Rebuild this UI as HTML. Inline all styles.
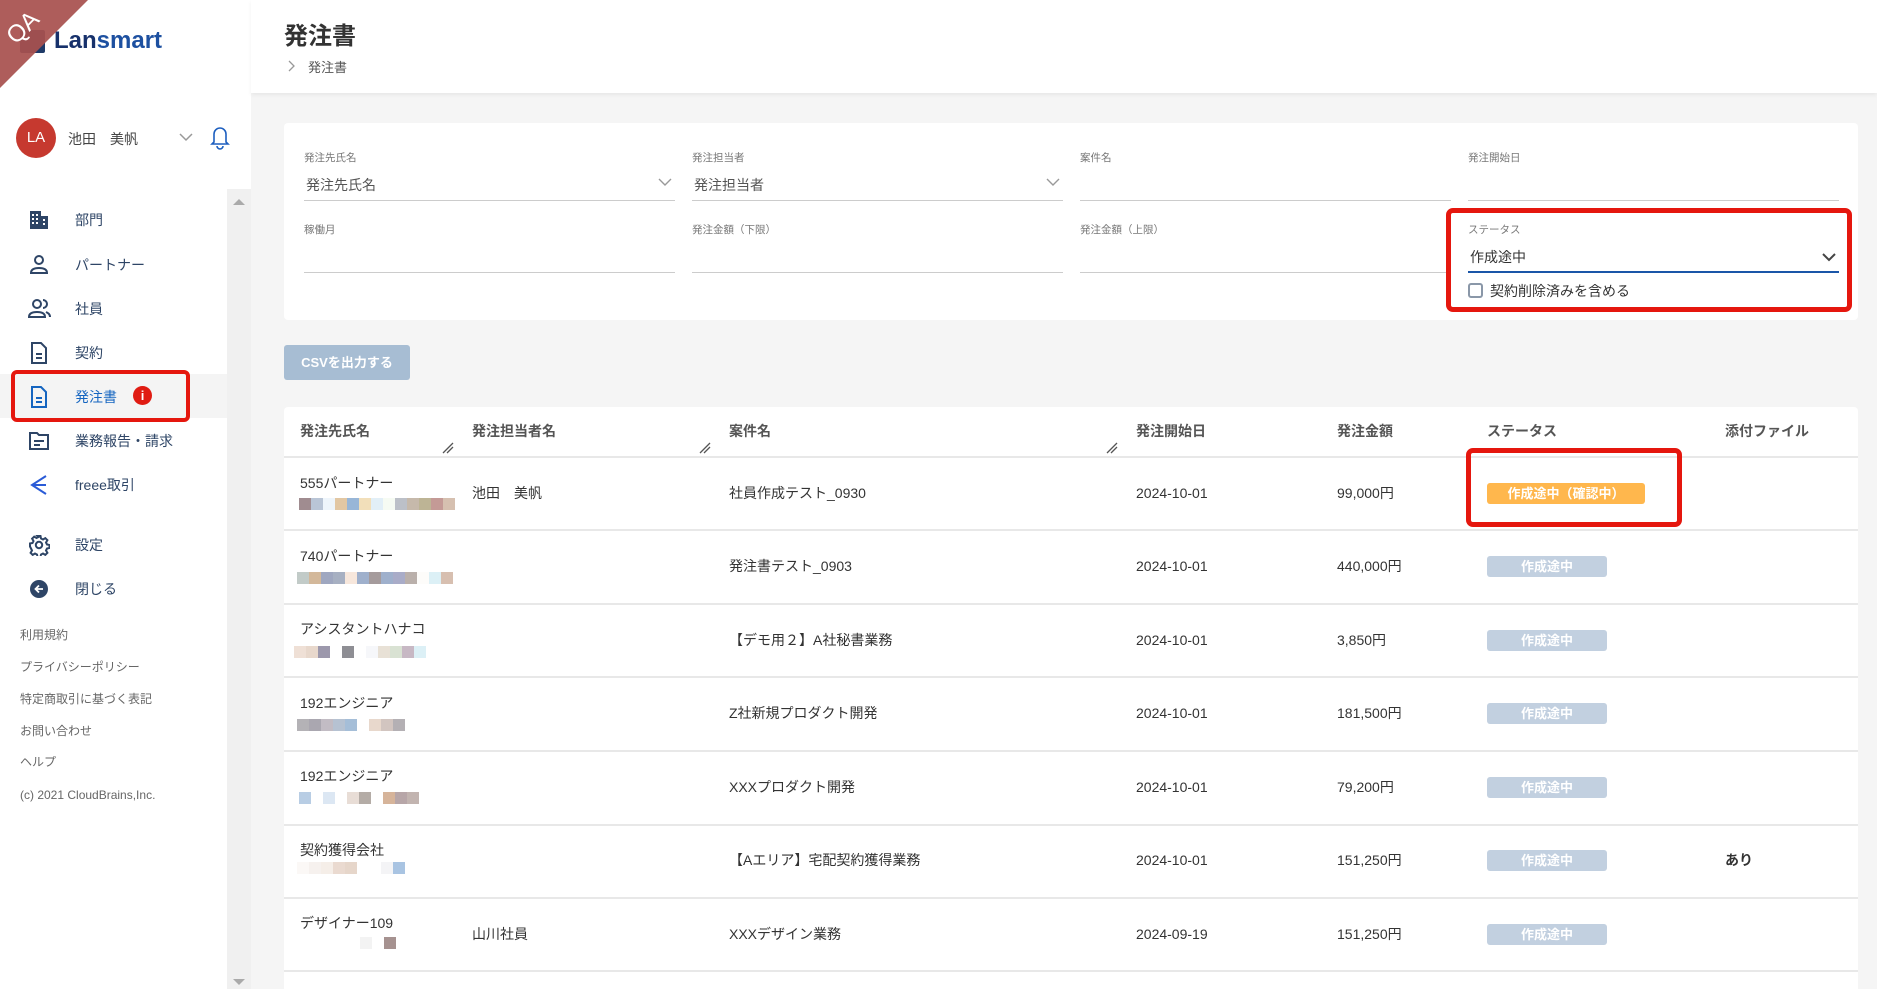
<!DOCTYPE html>
<html><head><meta charset="utf-8"><style>
*{box-sizing:border-box;margin:0;padding:0}
body{width:1877px;height:989px;overflow:hidden;background:#f5f5f5;font-family:"Liberation Sans","Noto Sans CJK JP",sans-serif;color:#333;position:relative}
.a{position:absolute;white-space:nowrap}
#side{position:absolute;left:0;top:0;width:251px;height:989px;background:#fff}
.mi{position:absolute;left:0;width:227px;height:44px}
.mi .t{position:absolute;left:75px;top:12px;font-size:14px;color:#2e4566}
.mi svg{position:absolute;left:28px;top:11px}
.fl{position:absolute;left:20px;font-size:12px;color:#666}
.card{position:absolute;background:#fff;border-radius:4px}
.lb{position:absolute;font-size:10.5px;color:#777}
.in{position:absolute;width:371px;height:1px;background:#ccc}
.vl{position:absolute;font-size:14px;color:#444}
.th{position:absolute;top:421px;font-size:14px;font-weight:bold;color:#555}
.rl{position:absolute;left:284px;width:1574px;height:2px;background:#e8e8e8}
.td{position:absolute;font-size:14px;color:#333;line-height:20px}
.bd{position:absolute;left:1487px;width:120px;height:21px;background:#c2d0e0;border-radius:3px;color:#fff;font-size:13px;font-weight:bold;text-align:center;line-height:21px}
.blur{position:absolute;height:12px;display:flex}
.blur i{display:block;width:12px;height:12px}
.rs{position:absolute;width:12px;height:12px}
</style></head><body>
<div id="side">
 <div class="a" style="left:20px;top:30px;width:25px;height:23px;background:#1f3a68;border-radius:2px"></div>
 <div class="a" style="left:54px;top:27px;font-size:24px;font-weight:bold;color:#17316b">Lan<span style="color:#1d50a0">smart</span></div>
 <svg class="a" style="left:0;top:0" width="90" height="90"><polygon points="0,0 88,0 0,88" fill="#a8514f" opacity="0.93"/></svg>
 <div class="a" style="left:6px;top:14px;font-size:24px;color:#fff;transform:rotate(-45deg);font-weight:300">QA</div>
 <div class="a" style="left:16px;top:118px;width:40px;height:40px;border-radius:50%;background:#c6392f;color:#fff;font-size:15px;text-align:center;line-height:40px">LA</div>
 <div class="a" style="left:68px;top:129px;font-size:14px;color:#444">池田　美帆</div>
 <svg class="a" style="left:178px;top:132px" width="16" height="10"><path d="M2 2l6 6 6-6" fill="none" stroke="#999" stroke-width="1.5"/></svg>
 <svg class="a" style="left:209px;top:124px" width="22" height="26"><path d="M5 18V10a6 6 0 0112 0v8l2 2H3z" fill="none" stroke="#1d5fbf" stroke-width="1.6"/><path d="M8 22a3 3 0 006 0" fill="none" stroke="#1d5fbf" stroke-width="1.6"/></svg>
 <div class="a" style="left:227px;top:189px;width:24px;height:800px;background:#f0f0f0"></div>
 <svg class="a" style="left:233px;top:198px" width="12" height="8"><path d="M0 7L6 1l6 6z" fill="#aaa"/></svg>
 <svg class="a" style="left:233px;top:978px" width="12" height="8"><path d="M0 1L6 7l6-6z" fill="#aaa"/></svg>
 <div class="a" style="left:0;top:374px;width:227px;height:44px;background:#f4f4f4"></div>
 <div class="mi" style="top:198px"><svg width="22" height="22"><path d="M2 2h11v18H2zM13 7h7v13h-7z" fill="#2e4566"/><g fill="#fff"><rect x="4" y="5" width="2" height="2"/><rect x="8" y="5" width="2" height="2"/><rect x="4" y="9" width="2" height="2"/><rect x="8" y="9" width="2" height="2"/><rect x="4" y="13" width="2" height="2"/><rect x="8" y="13" width="2" height="2"/><rect x="15" y="10" width="2" height="2"/><rect x="15" y="14" width="2" height="2"/></g></svg><span class="t">部門</span></div>
 <div class="mi" style="top:243px"><svg width="22" height="22"><circle cx="11" cy="6" r="4" fill="none" stroke="#2e4566" stroke-width="2"/><path d="M3 19c0-4 4-5 8-5s8 1 8 5z" fill="none" stroke="#2e4566" stroke-width="2"/></svg><span class="t">パートナー</span></div>
 <div class="mi" style="top:287px"><svg width="24" height="22"><circle cx="9" cy="6" r="4" fill="none" stroke="#2e4566" stroke-width="2"/><path d="M1 19c0-4 4-5 8-5s8 1 8 5z" fill="none" stroke="#2e4566" stroke-width="2"/><path d="M15 2a4 4 0 010 8M18 14c2 1 4 2 4 5" fill="none" stroke="#2e4566" stroke-width="2"/></svg><span class="t">社員</span></div>
 <div class="mi" style="top:331px"><svg width="22" height="22"><path d="M4 1h9l5 5v15H4z" fill="none" stroke="#2e4566" stroke-width="2"/><path d="M8 12h6M8 16h6" stroke="#2e4566" stroke-width="2"/></svg><span class="t">契約</span></div>
 <div class="mi" style="top:375px"><svg width="22" height="22"><path d="M4 1h9l5 5v15H4z" fill="none" stroke="#1565c0" stroke-width="2"/><path d="M8 12h6M8 16h6" stroke="#1565c0" stroke-width="2"/></svg><span class="t" style="color:#1565c0">発注書</span></div>
 <div class="a" style="left:133px;top:386px;width:19px;height:19px;border-radius:50%;background:#e01b12;color:#fff;font-size:13px;font-weight:bold;text-align:center;line-height:19px">i</div>
 <div class="a" style="left:11px;top:370px;width:179px;height:52px;border:4px solid #e5170e;border-radius:6px"></div>
 <div class="mi" style="top:419px"><svg width="22" height="22"><path d="M2 3h7l2 2h9v14H2z" fill="none" stroke="#2e4566" stroke-width="2"/><path d="M6 11h10M6 15h6" stroke="#2e4566" stroke-width="2"/></svg><span class="t">業務報告・請求</span></div>
 <div class="mi" style="top:463px"><svg width="22" height="22"><path d="M18 2L4 11l14 9M4 11h14" fill="none" stroke="#2a5bd7" stroke-width="2"/></svg><span class="t">freee取引</span></div>
 <div class="mi" style="top:523px"><svg width="22" height="22"><g fill="none" stroke="#2e4566" stroke-width="2"><circle cx="11" cy="11" r="3.2"/><path d="M9.5 2h3l.5 2.5 2 1 2.3-1.4 2.1 2.1-1.4 2.3 1 2 2.5.5v3l-2.5.5-1 2 1.4 2.3-2.1 2.1-2.3-1.4-2 1-.5 2.5h-3l-.5-2.5-2-1-2.3 1.4-2.1-2.1 1.4-2.3-1-2L2 12.5v-3l2.5-.5 1-2-1.4-2.3 2.1-2.1 2.3 1.4 2-1z"/></g></svg><span class="t">設定</span></div>
 <div class="mi" style="top:567px"><svg width="22" height="22"><circle cx="11" cy="11" r="9" fill="#2e4566"/><path d="M15 11H8M11 7.5L7.5 11l3.5 3.5" fill="none" stroke="#fff" stroke-width="1.8"/></svg><span class="t">閉じる</span></div>
 <div class="fl" style="top:626px">利用規約</div>
 <div class="fl" style="top:658px">プライバシーポリシー</div>
 <div class="fl" style="top:690px">特定商取引に基づく表記</div>
 <div class="fl" style="top:722px">お問い合わせ</div>
 <div class="fl" style="top:753px">ヘルプ</div>
 <div class="fl" style="top:788px">(c) 2021 CloudBrains,Inc.</div>
</div>
<div class="a" style="left:251px;top:0;width:1626px;height:93px;background:#fff;box-shadow:0 2px 4px rgba(0,0,0,.06)"></div>
<div class="a" style="left:284px;top:16px;font-size:24px;font-weight:bold;color:#333">発注書</div>
<svg class="a" style="left:288px;top:60px" width="8" height="12"><path d="M1 1l5 5-5 5" fill="none" stroke="#999" stroke-width="1.3"/></svg>
<div class="a" style="left:308px;top:57px;font-size:13px;color:#555">発注書</div>

<div class="card" style="left:284px;top:123px;width:1574px;height:197px"></div>
<div class="lb" style="left:304px;top:150px">発注先氏名</div><div class="vl" style="left:306px;top:175px;color:#555">発注先氏名</div><div class="in" style="left:304px;top:200px"></div>
<svg class="a" style="left:658px;top:178px" width="14" height="9"><path d="M1 1l6 6 6-6" fill="none" stroke="#999" stroke-width="1.4"/></svg>
<div class="lb" style="left:692px;top:150px">発注担当者</div><div class="vl" style="left:694px;top:175px;color:#555">発注担当者</div><div class="in" style="left:692px;top:200px"></div>
<svg class="a" style="left:1046px;top:178px" width="14" height="9"><path d="M1 1l6 6 6-6" fill="none" stroke="#999" stroke-width="1.4"/></svg>
<div class="lb" style="left:1080px;top:150px">案件名</div><div class="in" style="left:1080px;top:200px"></div>
<div class="lb" style="left:1468px;top:150px">発注開始日</div><div class="in" style="left:1468px;top:200px"></div>
<div class="lb" style="left:304px;top:222px">稼働月</div><div class="in" style="left:304px;top:272px"></div>
<div class="lb" style="left:692px;top:222px">発注金額（下限）</div><div class="in" style="left:692px;top:272px"></div>
<div class="lb" style="left:1080px;top:222px">発注金額（上限）</div><div class="in" style="left:1080px;top:272px"></div>
<div class="lb" style="left:1468px;top:222px">ステータス</div><div class="vl" style="left:1470px;top:247px;color:#333">作成途中</div>
<div class="in" style="left:1468px;top:271px;background:#1a56a8;height:2px"></div>
<svg class="a" style="left:1822px;top:253px" width="14" height="9"><path d="M1 1l6 6 6-6" fill="none" stroke="#444" stroke-width="2"/></svg>
<div class="a" style="left:1468px;top:283px;width:15px;height:15px;border:2px solid #8a97a8;border-radius:3px"></div>
<div class="a" style="left:1490px;top:281px;font-size:14px;color:#333">契約削除済みを含める</div>
<div class="a" style="left:1446px;top:208px;width:406px;height:104px;border:5px solid #e5170e;border-radius:7px"></div>

<div class="a" style="left:284px;top:345px;width:126px;height:35px;background:#a7bdd3;border-radius:3px;color:#fff;font-size:13px;font-weight:bold;text-align:center;line-height:35px">CSVを出力する</div>

<div class="card" style="left:284px;top:407px;width:1574px;height:582px;border-radius:4px 4px 0 0"></div>
<div class="th" style="left:300px">発注先氏名</div>
<div class="th" style="left:472px">発注担当者名</div>
<div class="th" style="left:729px">案件名</div>
<div class="th" style="left:1136px">発注開始日</div>
<div class="th" style="left:1337px">発注金額</div>
<div class="th" style="left:1487px">ステータス</div>
<div class="th" style="left:1725px">添付ファイル</div>
<svg class="rs" style="left:442px;top:442px"><path d="M1 11L11 1M5 11L11 5" stroke="#555" stroke-width="1.3"/></svg>
<svg class="rs" style="left:699px;top:442px"><path d="M1 11L11 1M5 11L11 5" stroke="#555" stroke-width="1.3"/></svg>
<svg class="rs" style="left:1106px;top:442px"><path d="M1 11L11 1M5 11L11 5" stroke="#555" stroke-width="1.3"/></svg>
<div class="rl" style="top:456px"></div><div class="rl" style="top:529px"></div><div class="rl" style="top:603px"></div><div class="rl" style="top:676px"></div><div class="rl" style="top:750px"></div><div class="rl" style="top:824px"></div><div class="rl" style="top:897px"></div><div class="rl" style="top:970px"></div>

<div class="td" style="left:300px;top:473px">555パートナー</div>
<div class="blur" style="left:299px;top:498px"><i style="background:#a08c90"></i><i style="background:#b9c5d6"></i><i style="background:#eef5fb"></i><i style="background:#e2c7a3"></i><i style="background:#98b6d7"></i><i style="background:#f2dfba"></i><i style="background:#e2eff7"></i><i style="background:#f6fbf3"></i><i style="background:#bcc0c8"></i><i style="background:#c6b9ab"></i><i style="background:#bdb495"></i><i style="background:#c49a96"></i><i style="background:#d6c0b0"></i></div>
<div class="td" style="left:472px;top:483px">池田　美帆</div>
<div class="td" style="left:729px;top:483px">社員作成テスト_0930</div>
<div class="td" style="left:1136px;top:483px">2024-10-01</div>
<div class="td" style="left:1337px;top:483px">99,000円</div>
<div class="bd" style="top:483px;width:158px;background:#ffb74d">作成途中（確認中）</div>
<div class="a" style="left:1466px;top:448px;width:216px;height:79px;border:5px solid #e5170e;border-radius:7px"></div>

<div class="td" style="left:300px;top:546px">740パートナー</div>
<div class="blur" style="left:297px;top:572px"><i style="background:#c2cbc8"></i><i style="background:#d3b89a"></i><i style="background:#9fa7c0"></i><i style="background:#a7b0c2"></i><i style="background:#f7e7dc"></i><i style="background:#9fb0cc"></i><i style="background:#a59b9c"></i><i style="background:#9fb0cc"></i><i style="background:#a9acc8"></i><i style="background:#bab0ab"></i><i style="background:#fdfcfa"></i><i style="background:#dcf0f6"></i><i style="background:#d7bfb0"></i></div>
<div class="td" style="left:729px;top:556px">発注書テスト_0903</div>
<div class="td" style="left:1136px;top:556px">2024-10-01</div>
<div class="td" style="left:1337px;top:556px">440,000円</div>
<div class="bd" style="top:556px">作成途中</div>

<div class="td" style="left:300px;top:619px">アシスタントハナコ</div>
<div class="blur" style="left:294px;top:646px"><i style="background:#efe0d6"></i><i style="background:#e8d8cc"></i><i style="background:#9c98ac"></i><i style="background:#fff"></i><i style="background:#8e8e94"></i><i style="background:#fff"></i><i style="background:#f6f7fa"></i><i style="background:#e8e1d6"></i><i style="background:#d9e2d3"></i><i style="background:#c7b8c4"></i><i style="background:#dcf0f6"></i></div>
<div class="td" style="left:729px;top:630px">【デモ用２】A社秘書業務</div>
<div class="td" style="left:1136px;top:630px">2024-10-01</div>
<div class="td" style="left:1337px;top:630px">3,850円</div>
<div class="bd" style="top:630px">作成途中</div>

<div class="td" style="left:300px;top:693px">192エンジニア</div>
<div class="blur" style="left:297px;top:719px"><i style="background:#b4b2b6"></i><i style="background:#aaa7b0"></i><i style="background:#c2bcc4"></i><i style="background:#b6c2d2"></i><i style="background:#a5bed8"></i><i style="background:#fff"></i><i style="background:#e8d8cc"></i><i style="background:#d2c5c0"></i><i style="background:#b4b0b4"></i></div>
<div class="td" style="left:729px;top:703px">Z社新規プロダクト開発</div>
<div class="td" style="left:1136px;top:703px">2024-10-01</div>
<div class="td" style="left:1337px;top:703px">181,500円</div>
<div class="bd" style="top:703px">作成途中</div>

<div class="td" style="left:300px;top:766px">192エンジニア</div>
<div class="blur" style="left:299px;top:792px"><i style="background:#b8cde4"></i><i style="background:#fff"></i><i style="background:#dce7f3"></i><i style="background:#fff"></i><i style="background:#e8ddd6"></i><i style="background:#b4aca6"></i><i style="background:#fff"></i><i style="background:#d6b49a"></i><i style="background:#b7a6a8"></i><i style="background:#c2b4b0"></i></div>
<div class="td" style="left:729px;top:777px">XXXプロダクト開発</div>
<div class="td" style="left:1136px;top:777px">2024-10-01</div>
<div class="td" style="left:1337px;top:777px">79,200円</div>
<div class="bd" style="top:777px">作成途中</div>

<div class="td" style="left:300px;top:840px">契約獲得会社</div>
<div class="blur" style="left:297px;top:862px"><i style="background:#fbf8f6"></i><i style="background:#f6f1ee"></i><i style="background:#f5eee8"></i><i style="background:#eadad0"></i><i style="background:#e6d6ca"></i><i style="background:#fff"></i><i style="background:#fff"></i><i style="background:#f4f4f6"></i><i style="background:#a9c4e2"></i></div>
<div class="td" style="left:729px;top:850px">【Aエリア】宅配契約獲得業務</div>
<div class="td" style="left:1136px;top:850px">2024-10-01</div>
<div class="td" style="left:1337px;top:850px">151,250円</div>
<div class="bd" style="top:850px">作成途中</div>
<div class="td" style="left:1725px;top:850px;font-weight:bold">あり</div>

<div class="td" style="left:300px;top:913px">デザイナー109</div>
<div class="blur" style="left:360px;top:937px"><i style="background:#f3f3f3"></i><i style="background:#fff"></i><i style="background:#a69290"></i></div>
<div class="td" style="left:472px;top:924px">山川社員</div>
<div class="td" style="left:729px;top:924px">XXXデザイン業務</div>
<div class="td" style="left:1136px;top:924px">2024-09-19</div>
<div class="td" style="left:1337px;top:924px">151,250円</div>
<div class="bd" style="top:924px">作成途中</div>
</body></html>
